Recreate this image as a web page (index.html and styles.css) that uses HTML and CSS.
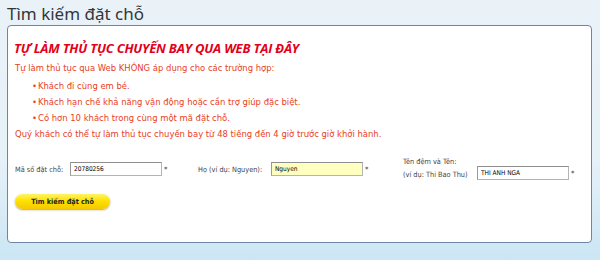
FILE: index.html
```html
<!DOCTYPE html>
<html lang="vi">
<head>
<meta charset="utf-8">
<link rel="stylesheet" href="styles.css">
</head>
<body>
<div class="page">
  <h1 class="title">Tìm kiếm đặt chỗ</h1>
  <div class="box">
    <h2 class="heading">TỰ LÀM THỦ TỤC CHUYẾN BAY QUA WEB TẠI ĐÂY</h2>
    <p class="line">Tự làm thủ tục qua Web KHÔNG áp dụng cho các trường hợp:</p>
    <ul class="list">
      <li>Khách đi cùng em bé.</li>
      <li>Khách hạn chế khả năng vận động hoặc cần trợ giúp đặc biệt.</li>
      <li>Có hơn 10 khách trong cùng một mã đặt chỗ.</li>
    </ul>
    <p class="line last">Quý khách có thể tự làm thủ tục chuyến bay từ 48 tiếng đến 4 giờ trước giờ khởi hành.</p>
    <div class="form">
      <div class="field f1">
        <label class="lbl l1">Mã số đặt chỗ:</label>
        <input class="inp" type="text" value="20780256">
        <span class="req">*</span>
      </div>
      <div class="field f2">
        <label class="lbl l2">Họ (ví dụ: Nguyen):</label>
        <input class="inp yellow" type="text" value="Nguyen">
        <span class="req">*</span>
      </div>
      <div class="field f3">
        <label class="lbl l3">Tên đệm và Tên:<br>(ví dụ: Thi Bao Thu)</label>
        <input class="inp" type="text" value="THI ANH NGA">
        <span class="req">*</span>
      </div>
    </div>
    <button class="btn" type="button">Tìm kiếm đặt chỗ</button>
  </div>
</div>
</body>
</html>
```
FILE: styles.css
```css
html, body {
  margin: 0;
  padding: 0;
}
body {
  width: 600px;
  height: 260px;
  overflow: hidden;
  background: linear-gradient(180deg, #eaf2f8 0%, #e7f1f8 60%, #cbe6f4 100%);
  font-family: "DejaVu Sans Condensed", "DejaVu Sans", Verdana, sans-serif;
}
.page {
  padding: 0 8px 0 7px;
}
.title {
  margin: 0;
  padding-top: 3px;
  height: 22px;
  font-family: "Noto Sans", sans-serif;
  font-weight: normal;
  font-size: 17px;
  line-height: 22px;
  color: #363636;
  white-space: nowrap;
}
.box {
  box-sizing: border-box;
  height: 218px;
  background: #fff;
  border: 1px solid #6e85a3;
  border-radius: 4px;
  padding: 12px 7px 0 7px;
}
.heading {
  margin: 0 0 2px -1px;
  font-family: "Open Sans", sans-serif;
  font-style: italic;
  font-weight: bold;
  font-size: 13px;
  line-height: 20px;
  color: #e2001a;
  letter-spacing: -0.2px;
  white-space: nowrap;
}
.line {
  margin: 0;
  font-size: 9.4px;
  line-height: 16px;
  color: #e8401e;
  white-space: nowrap;
}
.line.last { line-height: 15px; }
.list {
  margin: 2px 0 0 0;
  padding: 0 0 0 17px;
  list-style: none;
  font-size: 9.4px;
  line-height: 16px;
  color: #e8401e;
  white-space: nowrap;
}
.list li::before {
  content: "•";
  margin-right: 1px;
}
.form {
  display: flex;
  align-items: flex-start;
  height: 14px;
  margin-top: 21px;
}
.field {
  display: flex;
  align-items: center;
  flex: none;
}
.f1 { width: 183px; }
.f2 { width: 205px; }
.f3 {
  margin-top: -7px;
  align-items: flex-end;
}
.lbl {
  flex: none;
  font-size: 7.3px;
  line-height: 13px;
  color: #444;
  white-space: nowrap;
}
.l1 { width: 55px; }
.l2 { width: 73px; }
.l3 { width: 74px; }
.inp {
  box-sizing: border-box;
  flex: none;
  width: 92px;
  height: 14px;
  padding: 0 3px;
  border: 1px solid #b4b4b4;
  border-top-color: #8e8e8e;
  border-left-color: #9a9a9a;
  font-family: "DejaVu Sans Condensed", "DejaVu Sans", Verdana, sans-serif;
  font-size: 6.5px;
  color: #000;
  background: #fff;
  outline: none;
}
.inp.yellow { background: #ffffc0; }
.req {
  font-size: 7.5px;
  line-height: 13px;
  color: #444;
  margin-left: 2px;
}
.f3 .inp { margin-bottom: 1px; }
.f3 .req { margin-bottom: 1px; }
.btn {
  display: block;
  margin-top: 18px;
  margin-left: 0;
  width: 95px;
  height: 15px;
  border: none;
  border-radius: 8px;
  background: linear-gradient(180deg, #fff46a 0%, #ffe200 45%, #f4c800 100%);
  box-shadow: 0 1px 2px rgba(120, 90, 0, 0.55);
  font-family: "DejaVu Sans Condensed", "DejaVu Sans", Verdana, sans-serif;
  font-weight: bold;
  font-size: 7.2px;
  color: #222;
  padding: 0;
}
```
